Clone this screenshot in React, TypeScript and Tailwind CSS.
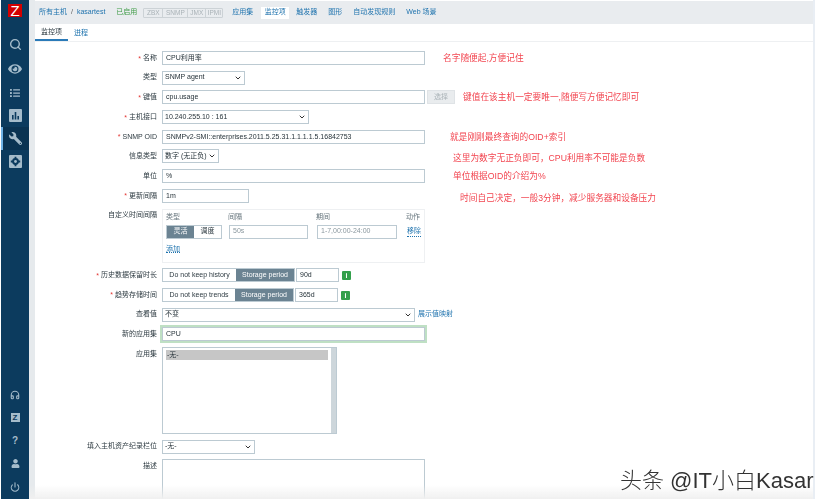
import type { ReactNode } from "react";
import { ChevronDown, Headphones, Power, Search } from "lucide-react";
import { FaEye, FaList, FaUser, FaWrench } from "react-icons/fa";

const font = "font-['Liberation_Sans','Noto_Sans_CJK_SC',sans-serif]";
const fieldBorder = "border border-[#bccad2]";

const Row = ({ label, required, h = "h-[14px]", children }: { label: string; required?: boolean; h?: string; children?: ReactNode }) => (
  <div className={`flex ${h} gap-[5px]`}>
    <div className="w-[122px] shrink-0 h-[14px] flex items-center justify-end gap-[2px] text-[#2d3a41]">
      {required && <span className="text-[#e33734] text-[7px] leading-none">*</span>}
      <span>{label}</span>
    </div>
    {children}
  </div>
);

const Input = ({ value, w = "w-[263px]", muted, className = "" }: { value?: string; w?: string; muted?: boolean; className?: string }) => (
  <div className={`${w} h-[14px] ${fieldBorder} bg-white flex items-center px-[3px] whitespace-nowrap overflow-hidden ${muted ? "text-[#8a979e]" : "text-[#1f2c33]"} ${className}`}>
    {value}
  </div>
);

const Select = ({ value, w }: { value: string; w: string }) => (
  <div className={`${w} h-[14px] ${fieldBorder} bg-white flex items-center justify-between pl-[2px] pr-[2px] text-[#1f2c33] whitespace-nowrap`}>
    <span>{value}</span>
    <ChevronDown size={8} strokeWidth={3} className="text-[#333] shrink-0" />
  </div>
);

const Toggle = ({ left, right, leftW, rightW, active }: { left: string; right: string; leftW: string; rightW: string; active: "left" | "right" }) => (
  <div className={`flex h-[14px] ${fieldBorder} whitespace-nowrap`}>
    <div className={`${leftW} flex items-center justify-center ${active === "left" ? "bg-[#6b8392] text-white" : "bg-white text-[#2d3a41]"}`}>{left}</div>
    <div className={`${rightW} flex items-center justify-center ${active === "right" ? "bg-[#6b8392] text-white" : "bg-white text-[#2d3a41]"}`}>{right}</div>
  </div>
);

const InfoBadge = () => (
  <div className="w-[9px] h-[9px] ml-[2px] mt-[3px] bg-[#34a04c] text-white text-[7px] font-bold leading-none flex items-center justify-center rounded-[1px]">i</div>
);

const SquareChart = () => (
  <svg width="13" height="13" viewBox="0 0 13 13">
    <rect width="13" height="13" rx="1" fill="#a5bccb" />
    <path d="M3 6h1.6v4.4H3zM5.7 3h1.6v7.4H5.7zM8.4 7H10v3.4H8.4z" fill="#0c3b5e" />
  </svg>
);

const SquareGear = () => (
  <svg width="13" height="13" viewBox="0 0 13 13">
    <rect width="13" height="13" rx="1" fill="#a5bccb" />
    <circle cx="6.5" cy="6.5" r="3.4" fill="#0c3b5e" />
    <path d="M5.6 1.8h1.8v9.4H5.6zM1.8 5.6h9.4v1.8H1.8z" fill="#0c3b5e" />
    <circle cx="6.5" cy="6.5" r="1.4" fill="#a5bccb" />
  </svg>
);

const NavIcon = ({ children, h = "h-[23px]", active }: { children: ReactNode; h?: string; active?: boolean }) => (
  <div className={`${h} flex items-center justify-center text-[#a5bccb] ${active ? "bg-[#0a3352] border-l-2 border-[#6fb2e6] pr-[2px]" : ""}`}>{children}</div>
);

const Sidebar = () => (
  <div className="w-[28px] ml-[1px] shrink-0 bg-[#0c3b5e] flex flex-col justify-between">
    <div>
      <div className="h-[32px] pt-[4px] flex justify-center">
        <div className="w-[14px] h-[13px] bg-[#d40000] text-white text-[15px] leading-[13px] text-center">Z</div>
      </div>
      <div className="h-[1px]" />
      <NavIcon h="h-[23px]"><Search size={13} strokeWidth={2.6} /></NavIcon>
      <NavIcon h="h-[25px]"><FaEye size={14} /></NavIcon>
      <NavIcon><FaList size={10} /></NavIcon>
      <NavIcon><SquareChart /></NavIcon>
      <NavIcon active><FaWrench size={13} className="-scale-x-100" /></NavIcon>
      <NavIcon><SquareGear /></NavIcon>
    </div>
    <div className="pb-[1px]">
      <NavIcon><Headphones size={10} strokeWidth={2.6} /></NavIcon>
      <NavIcon>
        <div className="w-[9px] h-[9px] bg-[#a5bccb] text-[#0c3b5e] text-[8px] leading-[9px] font-bold text-center">Z</div>
      </NavIcon>
      <NavIcon><span className="text-[10px] font-bold">?</span></NavIcon>
      <NavIcon><FaUser size={9} /></NavIcon>
      <NavIcon><Power size={10} strokeWidth={2.6} /></NavIcon>
    </div>
  </div>
);

const Header = () => (
  <div className="h-[23px] mt-[1px] bg-[#e9ecef] flex items-center pl-[4px] text-[#1f73ae] whitespace-nowrap">
    <span>所有主机</span>
    <span className="ml-[4px] text-[#555]">/</span>
    <span className="ml-[4px]">kasartest</span>
    <span className="ml-[11px] text-[#3e9b45]">已启用</span>
    <div className="ml-[6px] w-[80px] h-[10px] border border-[#ccd2d6] rounded-[1px] flex text-[#a9b2b7] text-[6.5px] leading-[8px]">
      <span className="w-[19px] text-center border-r border-[#ccd2d6]">ZBX</span>
      <span className="w-[25px] text-center border-r border-[#ccd2d6]">SNMP</span>
      <span className="w-[18px] text-center border-r border-[#ccd2d6]">JMX</span>
      <span className="flex-1 text-center">IPMI</span>
    </div>
    <span className="ml-[9px]">应用集</span>
    <span className="ml-[8px] w-[28px] h-[12px] bg-white flex items-center justify-center">监控项</span>
    <span className="ml-[7px]">触发器</span>
    <span className="ml-[11px]">图形</span>
    <span className="ml-[11px]">自动发现规则</span>
    <span className="ml-[11px]">Web 场景</span>
  </div>
);

const Annotation = ({ x, y, children }: { x: string; y: string; children: string }) => (
  <span className={`absolute ${x} ${y} text-[8.7px] leading-[12px] text-[#f2444f] whitespace-nowrap`}>{children}</span>
);

export default function App() {
  return (
    <div className={`relative h-[499px] w-[815px] overflow-hidden bg-white text-[7px] ${font}`}>
      <div className="relative h-full flex blur-[0.3px]">
        <Sidebar />
        <div className="w-[6px] shrink-0 bg-[#e6eaed]" />
        <div className="flex-1 min-w-0">
          <Header />
          <div className="h-[18px] border-b border-[#eef0f2] flex items-stretch">
            <div className="w-[33px] pt-[2px] flex items-center justify-center border-b-2 border-[#2a7ab8] text-[#2d3a41]">监控项</div>
            <div className="ml-[6px] pt-[2px] flex items-center text-[#1f73ae]">进程</div>
          </div>
          <div className="pt-[9px] flex flex-col gap-[5.7px]">
            <Row label="名称" required><Input value="CPU利用率" /></Row>
            <Row label="类型"><Select value="SNMP agent" w="w-[83px]" /></Row>
            <Row label="键值" required>
              <div className="flex gap-[2px]">
                <Input value="cpu.usage" />
                <div className="w-[28px] h-[14px] bg-[#e9ecee] border border-[#dfe3e6] text-[#a9b2b7] flex items-center justify-center">选择</div>
              </div>
            </Row>
            <Row label="主机接口" required><Select value="10.240.255.10 : 161" w="w-[147px]" /></Row>
            <Row label="SNMP OID" required><Input value="SNMPv2-SMI::enterprises.2011.5.25.31.1.1.1.1.5.16842753" /></Row>
            <Row label="信息类型"><Select value="数字 (无正负)" w="w-[57px]" /></Row>
            <Row label="单位"><Input value="%" /></Row>
            <Row label="更新间隔" required><Input value="1m" w="w-[87px]" /></Row>
            <Row label="自定义时间间隔" h="h-[54px]">
              <div className="w-[263px] h-[54px] border border-[#eef0f2] px-[3px] pt-[1px]">
                <div className="h-[13px] flex items-center text-[#66757d]">
                  <span className="w-[62px]">类型</span>
                  <span className="w-[88px]">间隔</span>
                  <span className="w-[90px]">期间</span>
                  <span>动作</span>
                </div>
                <div className="flex items-center h-[16px]">
                  <Toggle left="灵活" right="调度" leftW="w-[27px]" rightW="w-[27px]" active="left" />
                  <Input value="50s" w="w-[79px]" muted className="ml-[7px]" />
                  <Input value="1-7,00:00-24:00" w="w-[80px]" muted className="ml-[9px]" />
                  <span className="ml-[10px] text-[#1f73ae] border-b border-dotted border-[#1f73ae]">移除</span>
                </div>
                <div className="mt-[4px]">
                  <span className="text-[#1f73ae] border-b border-dotted border-[#1f73ae]">添加</span>
                </div>
              </div>
            </Row>
            <Row label="历史数据保留时长" required>
              <div className="flex gap-[1px]">
                <Toggle left="Do not keep history" right="Storage period" leftW="w-[73px]" rightW="w-[58px]" active="right" />
                <Input value="90d" w="w-[43px]" />
                <InfoBadge />
              </div>
            </Row>
            <Row label="趋势存储时间" required>
              <div className="flex gap-[1px]">
                <Toggle left="Do not keep trends" right="Storage period" leftW="w-[72px]" rightW="w-[58px]" active="right" />
                <Input value="365d" w="w-[43px]" />
                <InfoBadge />
              </div>
            </Row>
            <Row label="查看值">
              <Select value="不变" w="w-[253px]" />
              <span className="-ml-[2px] h-[14px] flex items-center text-[#1f73ae] whitespace-nowrap">展示值映射</span>
            </Row>
            <Row label="新的应用集">
              <Input value="CPU" className="outline-2 outline-[#bfe0c4]" />
            </Row>
            <Row label="应用集" h="h-[87px]">
              <div className={`w-[175px] h-[87px] ${fieldBorder} flex`}>
                <div className="flex-1 pt-[2px] px-[3px]">
                  <div className="h-[10px] bg-[#c6c6c6] flex items-center text-[#1f2c33] px-[1px]">-无-</div>
                </div>
                <div className="w-[5px] bg-[#cdd6db]" />
              </div>
            </Row>
            <Row label="填入主机资产纪录栏位"><Select value="-无-" w="w-[93px]" /></Row>
            <Row label="描述" h="h-[60px]">
              <div className={`w-[263px] h-[60px] ${fieldBorder}`} />
            </Row>
          </div>
        </div>
        <div className="w-[2px] shrink-0 bg-[#e9eef4]" />

        <Annotation x="left-[443px]" y="top-[52px]">名字随便起,方便记住</Annotation>
        <Annotation x="left-[463px]" y="top-[91px]">键值在该主机一定要唯一,随便写方便记忆即可</Annotation>
        <Annotation x="left-[450px]" y="top-[131px]">就是刚刚最终查询的OID+索引</Annotation>
        <Annotation x="left-[453px]" y="top-[152px]">这里为数字无正负即可，CPU利用率不可能是负数</Annotation>
        <Annotation x="left-[453px]" y="top-[170px]">单位根据OID的介绍为%</Annotation>
        <Annotation x="left-[460px]" y="top-[192px]">时间自己决定，一般3分钟，减少服务器和设备压力</Annotation>

        <div className="absolute left-[29px] right-[2px] bottom-0 h-[14px] bg-gradient-to-b from-transparent to-[#f0f0f0] pointer-events-none" />
      </div>
      <span className="absolute left-[620px] top-[468px] text-[22px] leading-[26px] font-light text-[#333] whitespace-nowrap">头条 @IT小白Kasar</span>
    </div>
  );
}
